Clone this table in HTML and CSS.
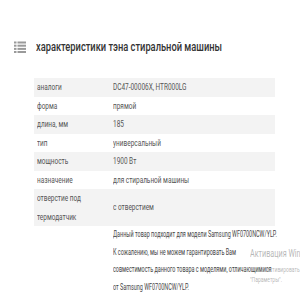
FILE: index.html
```html
<!DOCTYPE html>
<html lang="ru">
<head>
<meta charset="utf-8">
<link rel="stylesheet" href="styles.css">
</head>
<body>
<div class="page">
  <div class="heading">
    <svg class="list-icon" width="12" height="12" viewBox="0 0 12 12">
      <rect x="0" y="0.5" width="2.5" height="2" fill="#9a9a9a"/>
      <rect x="3.5" y="0.5" width="8.5" height="2" fill="#9a9a9a"/>
      <rect x="0" y="3.7" width="2.5" height="2" fill="#9a9a9a"/>
      <rect x="3.5" y="3.7" width="8.5" height="2" fill="#9a9a9a"/>
      <rect x="0" y="6.9" width="2.5" height="2" fill="#9a9a9a"/>
      <rect x="3.5" y="6.9" width="8.5" height="2" fill="#9a9a9a"/>
      <rect x="0" y="10" width="2.5" height="2" fill="#9a9a9a"/>
      <rect x="3.5" y="10" width="8.5" height="2" fill="#9a9a9a"/>
    </svg>
    <h2 class="title">характеристики тэна стиральной машины</h2>
  </div>
  <div class="specs">
    <div class="row shaded"><div class="k"><span class="cond">аналоги</span></div><div class="v"><span class="cond">DC47-00006X, HTR000LG</span></div></div>
    <div class="row"><div class="k"><span class="cond">форма</span></div><div class="v"><span class="cond">прямой</span></div></div>
    <div class="row shaded"><div class="k"><span class="cond">длина, мм</span></div><div class="v"><span class="cond">185</span></div></div>
    <div class="row"><div class="k"><span class="cond">тип</span></div><div class="v"><span class="cond">универсальный</span></div></div>
    <div class="row shaded"><div class="k"><span class="cond">мощность</span></div><div class="v"><span class="cond">1900 Вт</span></div></div>
    <div class="row"><div class="k"><span class="cond">назначение</span></div><div class="v"><span class="cond">для стиральной машины</span></div></div>
    <div class="row shaded"><div class="k"><span class="cond wrap">отверстие под термодатчик</span></div><div class="v"><span class="cond">с отверстием</span></div></div>
  </div>
  <p class="desc">Данный товар подходит для модели Samsung WF0700NCW/YLP.<br>К сожалению, мы не можем гарантировать Вам<br>совместимость данного товара с моделями, отличающимися<br>от Samsung WF0700NCW/YLP.</p>
</div>
<div class="watermark">
  <div class="wm-title">Активация Windows</div>
  <div class="wm-text">Чтобы активировать Windows, перейдите в раздел<br>"Параметры".</div>
</div>
</body>
</html>
```
FILE: styles.css
```css
html, body {
  margin: 0;
  padding: 0;
  background: #fff;
}
body {
  font-family: Roboto, "Liberation Sans", sans-serif;
  color: #444;
  width: 300px;
  height: 300px;
  overflow: hidden;
  position: relative;
}
.page {
  padding: 40px 25px 0 14px;
}
.heading {
  display: flex;
  align-items: center;
  gap: 10px;
  height: 14px;
}
.list-icon {
  flex: none;
}
.title {
  margin: 0;
  font-size: 12px;
  font-weight: 500;
  color: #333;
  white-space: nowrap;
  transform: scaleX(0.775);
  transform-origin: left center;
}
.specs {
  margin: 24px 0 0 20px;
  font-size: 8.5px;
  color: #555;
}
.row {
  display: flex;
  align-items: center;
  min-height: 18.5px;
}
.row.shaded {
  background: #f3f3f3;
}
.k {
  width: 76px;
  padding: 0 3px;
  box-sizing: border-box;
  line-height: 18.5px;
  flex: none;
}
.v {
  padding: 0 3px;
  line-height: 18.5px;
}
.cond {
  display: inline-block;
  white-space: nowrap;
  transform: scaleX(0.76);
  transform-origin: left center;
  vertical-align: top;
}
.cond.wrap {
  white-space: normal;
  width: 85px;
}
.desc {
  margin: 0 0 0 99px;
  width: 280px;
  font-size: 8.5px;
  line-height: 17.7px;
  color: #444;
  white-space: nowrap;
  transform: scaleX(0.64);
  transform-origin: left top;
}
.watermark {
  position: absolute;
  left: 250px;
  top: 248px;
  width: 50px;
  overflow: hidden;
  color: rgba(160,160,160,0.75);
  white-space: nowrap;
}
.wm-title {
  font-size: 10px;
  line-height: 12px;
  transform: scaleX(0.72);
  transform-origin: left center;
}
.wm-text {
  margin-top: 5px;
  font-size: 7px;
  line-height: 10px;
  transform: scaleX(0.72);
  transform-origin: left center;
}
```
